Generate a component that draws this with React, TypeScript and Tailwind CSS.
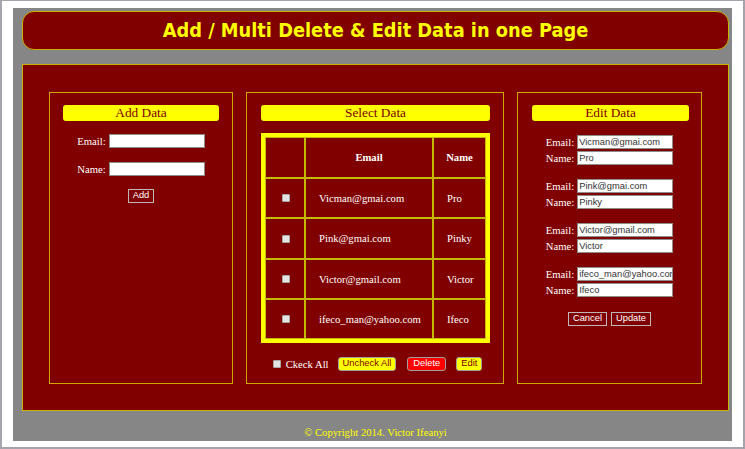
import React from "react";

const serif = { fontFamily: '"Liberation Serif", "Times New Roman", serif' };
const arial = { fontFamily: '"Liberation Sans", Arial, sans-serif' };

function Box() {
  return (
    <span className="inline-block w-[8px] h-[8px] bg-[#e4e4e4] border border-[#a8a8a8] rounded-[1px]" />
  );
}

function TitleBar({ text }: { text: string }) {
  return (
    <div
      className="h-[16px] bg-[#ffff00] rounded-[3px] flex items-center justify-center text-[13.33px] leading-none text-[#800000]"
      style={serif}
    >
      {text}
    </div>
  );
}

function Input({ value = "" }: { value?: string }) {
  return (
    <div
      className="w-[96px] h-[14px] bg-white border border-[#8c8c8c] overflow-hidden whitespace-nowrap text-[9.33px] leading-[12px] pl-[1px] text-[#333]"
      style={arial}
    >
      {value}
    </div>
  );
}

function Btn({ text, cls }: { text: string; cls: string }) {
  return (
    <div
      className={`h-[14px] flex items-center justify-center text-[9.33px] leading-none border ${cls}`}
      style={arial}
    >
      {text}
    </div>
  );
}

const rows = [
  { email: "Vicman@gmai.com", name: "Pro" },
  { email: "Pink@gmai.com", name: "Pinky" },
  { email: "Victor@gmail.com", name: "Victor" },
  { email: "ifeco_man@yahoo.com", name: "Ifeco" },
];

export default function App() {
  return (
    <div className="w-[745px] h-[449px] bg-white border-[#a7a3ad] border-t border-l-2 border-r-2 border-b-2 pt-[7px] pl-[11px] overflow-hidden">
      <div className="w-[719px] h-[433px] bg-[#868686] pt-[3px] pl-[9px] flex flex-col">
        {/* Header */}
        <div className="w-[707px] h-[39px] rounded-[12px] border border-[#c8b400] bg-[#800000] flex items-center justify-center">
          <span
            className="text-[#ffff00] font-bold text-[19.8px] leading-none"
            style={{ fontFamily: '"DejaVu Sans Condensed", "DejaVu Sans", Tahoma, sans-serif' }}
          >
            Add / Multi Delete &amp; Edit Data in one Page
          </span>
        </div>

        {/* Main */}
        <div
          className="mt-[14px] w-[707px] h-[347px] border border-[#c8b400] bg-[#800000] flex justify-center gap-[13px] pt-[27px] text-white"
          style={serif}
        >
          {/* Add Data */}
          <div className="w-[184px] h-[292px] border border-[#d0a800] pt-[12px] px-[13px] flex flex-col">
            <TitleBar text="Add Data" />
            <div className="mt-[13px] flex flex-col items-center text-[10.67px] leading-none">
              <div className="flex items-center gap-[3px]">
                <span>Email:</span>
                <Input />
              </div>
              <div className="mt-[14px] flex items-center gap-[3px]">
                <span>Name:</span>
                <Input />
              </div>
              <div className="mt-[13px]">
                <Btn text="Add" cls="px-[4px] bg-[#800000] border-[#c0b8b8] text-white" />
              </div>
            </div>
          </div>

          {/* Select Data */}
          <div className="w-[258px] h-[292px] border border-[#d0a800] pt-[12px] pl-[14px] pr-[13px] flex flex-col">
            <TitleBar text="Select Data" />
            <div className="mt-[12px] border-[4px] border-[#ffff00] grid grid-cols-[40px_128px_53px] grid-rows-[41px_40px_41px_40px_40px] text-[10.67px] leading-none">
              <div className="border border-[#c4b800]" />
              <div className="border border-[#c4b800] flex items-center justify-center font-bold">Email</div>
              <div className="border border-[#c4b800] flex items-center justify-center font-bold">Name</div>
              {rows.map((r) => (
                <React.Fragment key={r.email}>
                  <div className="border border-[#c4b800] flex items-center justify-center pl-[1px]">
                    <Box />
                  </div>
                  <div className="border border-[#c4b800] flex items-center pl-[13px] whitespace-nowrap">{r.email}</div>
                  <div className="border border-[#c4b800] flex items-center pl-[13px]">{r.name}</div>
                </React.Fragment>
              ))}
            </div>
            <div className="mt-[14px] flex items-center justify-center pl-[4px] text-[10.67px] leading-none">
              <Box />
              <span className="ml-[5px]">Ckeck All</span>
              <div className="ml-[9px]">
                <Btn text="Uncheck All" cls="px-[4px] bg-[#ffff00] border-[#a0a0a0] rounded-[3px] text-[#800000]" />
              </div>
              <div className="ml-[11px]">
                <Btn text="Delete" cls="px-[5px] bg-[#ff0000] border-[#a0a0a0] rounded-[3px] text-white" />
              </div>
              <div className="ml-[10px]">
                <Btn text="Edit" cls="px-[4px] bg-[#ffff00] border-[#a0a0a0] rounded-[3px] text-[#800000]" />
              </div>
            </div>
          </div>

          {/* Edit Data */}
          <div className="w-[185px] h-[292px] border border-[#d0a800] pt-[12px] pl-[14px] pr-[12px] flex flex-col">
            <TitleBar text="Edit Data" />
            <div className="mt-[14px] flex flex-col items-center gap-[14px] text-[10.67px] leading-none pr-[2px]">
              {rows.map((r) => (
                <div key={r.email} className="flex flex-col items-center gap-[2px]">
                  <div className="flex items-center gap-[3px]">
                    <span>Email:</span>
                    <Input value={r.email} />
                  </div>
                  <div className="flex items-center gap-[3px]">
                    <span>Name:</span>
                    <Input value={r.name} />
                  </div>
                </div>
              ))}
              <div className="mt-[1px] flex items-center gap-[4px]">
                <Btn text="Cancel" cls="px-[4px] bg-[#800000] border-[#c0b8b8] text-white" />
                <Btn text="Update" cls="px-[4px] bg-[#800000] border-[#c0b8b8] text-white" />
              </div>
            </div>
          </div>
        </div>

        {/* Footer */}
        <div className="w-[707px] pt-[15px] text-center text-[10.67px] leading-[12px] text-[#ffff00]" style={serif}>
          © Copyright 2014. Victor Ifeanyi
        </div>
      </div>
    </div>
  );
}
